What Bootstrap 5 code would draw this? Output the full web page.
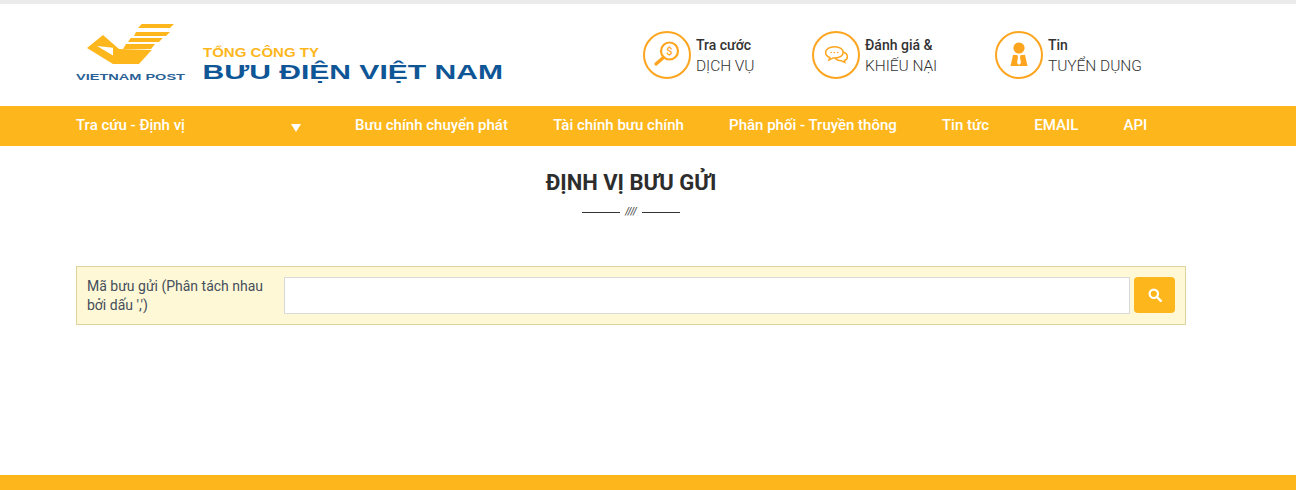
<!DOCTYPE html>
<html lang="vi">
<head>
  <meta charset="UTF-8" />
  <title>Định vị bưu gửi</title>
  <link href="https://cdn.jsdelivr.net/npm/bootstrap@5.3.0/dist/css/bootstrap.min.css" rel="stylesheet">
  <style>
    body {
      font-family: Roboto, "Liberation Sans", sans-serif;
      color: #333;
      background: #fff;
      height: 490px;
      overflow: hidden;
      border-top: 4px solid #ebebeb;
    }
    .page-wrap { width: 1110px; margin-left: 76px; }
    .top-head { height: 102px; }
    .logo-svg { display: block; margin-top: 16px; flex: none; }
    .head-links { margin-left: 139px; padding-top: 27px; }
    .head-link { width: 48px; height: 48px; border: 2px solid #fda51f; border-radius: 50%; flex: none; }
    .head-text { margin-left: 5px; line-height: 20px; color: #333; white-space: nowrap; }
    .head-text b { display: block; font-size: 14px; font-weight: 500; }
    .head-text span { display: block; font-size: 15.5px; font-weight: 300; letter-spacing: -0.05px; margin-top: 1px; }
    .main-nav { background: #fdb71c; height: 40px; }
    .main-nav a { color: #fff; font-size: 15px; font-weight: 500; text-decoration: none; line-height: 38px; white-space: nowrap; }
    .nav-first { width: 279px; padding-right: 54px; }
    .nav-arrow { width: 0; height: 0; border-left: 5.5px solid transparent; border-right: 5.5px solid transparent; border-top: 8px solid #fff; margin-top: 5px; }
    .nav-items { gap: 45.2px; }
    .page-title { font-size: 22px; font-weight: 700; color: #2d2d2d; margin: 24px 0 0; line-height: 26px; text-align: center; }
    .title-mark { margin-top: 9px; height: 14px; gap: 5px; }
    .title-mark i { width: 38px; height: 1px; background: #333; }
    .title-mark em { font-size: 10px; line-height: 14px; width: 12px; color: #555; text-align: center; font-weight: 500; }
    .search-box { margin-top: 47px; height: 59px; background: #fff8d6; border: 1px solid #dcd49c; padding: 10px; }
    .search-label { width: 197px; flex: none; font-size: 14px; line-height: 19px; color: #444e5c; }
    .search-input { height: 37px; width: 846px; border: 1px solid #d9d9d9; border-radius: 0; flex: none; }
    .search-btn { width: 41px; height: 36px; background: #fdb71c; border: 0; border-radius: 4px; margin-left: 4px; padding: 0; }
    .foot-bar { position: absolute; left: 0; right: 0; top: 475px; height: 15px; background: #fdb71c; }
  </style>
</head>
<body>
  <div class="top-head">
    <div class="page-wrap d-flex">
      <svg class="logo-svg" width="428" height="64" viewBox="0 0 428 64">
        <path fill="#fdb71c" d="M65.7 4H98L94 8H62zM60 12H94L90 16H58zM54.7 18H86.7L83 22H52zM50 24H79L75 29H47z"/>
        <path fill="#fdb71c" d="M11 28 L27 15 L43 29 L75.7 30 L63 44 L37 44 Z"/>
        <path fill="#fff" d="M21 26 L37 27.7 L37 35.5 Z"/>
        <text x="0" y="59.5" font-family="Liberation Sans, sans-serif" font-size="9.5" font-weight="700" fill="#2a6296" textLength="109" lengthAdjust="spacingAndGlyphs">VIETNAM POST</text>
        <text x="127" y="37" font-family="Liberation Sans, sans-serif" font-size="12" font-weight="700" fill="#fdb71c" textLength="116" lengthAdjust="spacingAndGlyphs">TỔNG CÔNG TY</text>
        <text x="126.5" y="59" font-family="Liberation Sans, sans-serif" font-size="19.5" font-weight="700" fill="#0f5696" textLength="300.5" lengthAdjust="spacingAndGlyphs">BƯU ĐIỆN VIỆT NAM</text>
      </svg>
      <div class="head-links d-flex">
        <div class="d-flex" style="width:169px">
          <div class="head-link d-flex align-items-center justify-content-center">
            <svg width="30" height="30" viewBox="0 0 30 30"><circle cx="17.5" cy="11" r="8.5" fill="none" stroke="#fda51f" stroke-width="2.2"/><path d="M11.5 17.5 L4 24" stroke="#fda51f" stroke-width="3.4" stroke-linecap="round"/><text x="17.5" y="15" font-size="11" font-family="Roboto, sans-serif" text-anchor="middle" fill="#fda51f" font-weight="500">$</text></svg>
          </div>
          <div class="head-text"><b class="mt-1">Tra cước</b><span>DỊCH VỤ</span></div>
        </div>
        <div class="d-flex" style="width:183px">
          <div class="head-link d-flex align-items-center justify-content-center">
            <svg width="25" height="20" viewBox="0 0 28 24"><path d="M12 2 C5 2 1 5 1 9 C1 12 3 14 6 15 L5 18 L10 15.5 H12 C18 15.5 22 13 22 9 C22 5 18 2 12 2Z" fill="#fff" stroke="#fda51f" stroke-width="1.8"/><path d="M22 8.5 C25 9.5 27 11.5 27 14 C27 16 25.5 18 23.5 18.5 L24 21 L19.5 18.8 C16 18.8 13.5 17.5 12.5 15.5" fill="none" stroke="#fda51f" stroke-width="1.8"/><circle cx="7.5" cy="9" r="1" fill="#fda51f"/><circle cx="11.5" cy="9" r="1" fill="#fda51f"/><circle cx="15.5" cy="9" r="1" fill="#fda51f"/></svg>
          </div>
          <div class="head-text"><b class="mt-1">Đánh giá &amp;</b><span>KHIẾU NẠI</span></div>
        </div>
        <div class="d-flex">
          <div class="head-link d-flex align-items-center justify-content-center">
            <svg width="20" height="26" viewBox="0 0 20 26"><circle cx="10" cy="6" r="5.6" fill="#fda51f"/><path d="M4 13 H16 L18.5 24 H1.5 Z" fill="#fda51f"/><path d="M8.2 13 H11.8 L11 15 L12 21 L10 23 L8 21 L9 15 Z" fill="#fff"/></svg>
          </div>
          <div class="head-text"><b class="mt-1">Tin</b><span>TUYỂN DỤNG</span></div>
        </div>
      </div>
    </div>
  </div>

  <nav class="main-nav">
    <div class="page-wrap d-flex">
      <a href="#" class="nav-first d-flex justify-content-between align-items-center">Tra cứu - Định vị <span class="nav-arrow"></span></a>
      <div class="nav-items d-flex">
        <a href="#">Bưu chính chuyển phát</a>
        <a href="#">Tài chính bưu chính</a>
        <a href="#">Phân phối - Truyền thông</a>
        <a href="#">Tin tức</a>
        <a href="#">EMAIL</a>
        <a href="#">API</a>
      </div>
    </div>
  </nav>

  <div class="page-wrap">
    <h2 class="page-title">ĐỊNH VỊ BƯU GỬI</h2>
    <div class="title-mark d-flex justify-content-center align-items-center"><i></i><em>////</em><i></i></div>
    <form class="search-box d-flex align-items-start">
      <label class="search-label">Mã bưu gửi (Phân tách nhau bởi dấu ',')</label>
      <input type="text" class="form-control search-input">
      <button type="button" class="btn search-btn d-flex align-items-center justify-content-center">
        <svg width="14" height="14" viewBox="0 0 14 14"><circle cx="5.8" cy="5.8" r="4.2" fill="none" stroke="#fff" stroke-width="2.2"/><path d="M9 9 L12.8 12.8" stroke="#fff" stroke-width="2.4" stroke-linecap="round"/></svg>
      </button>
    </form>
  </div>

  <div class="foot-bar"></div>
  <script src="https://cdn.jsdelivr.net/npm/bootstrap@5.3.0/dist/js/bootstrap.bundle.min.js"></script>
</body>
</html>
